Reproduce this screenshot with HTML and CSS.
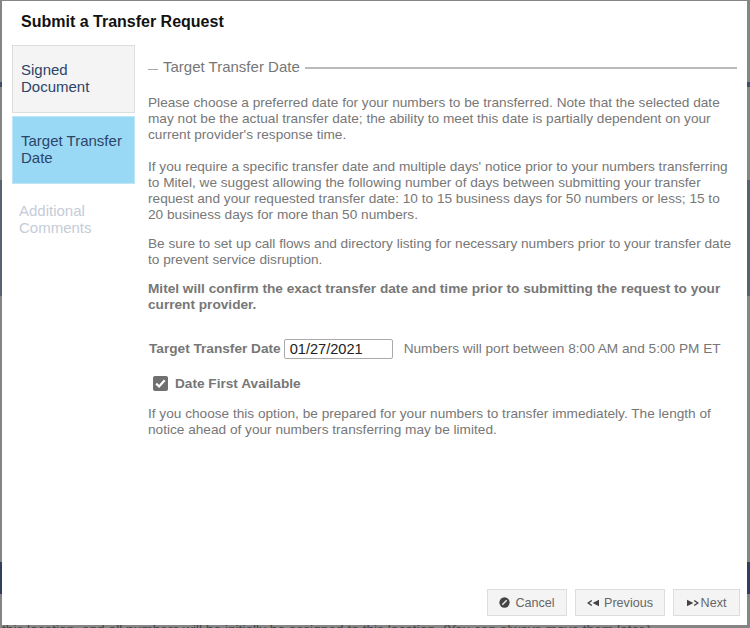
FILE: index.html
```html
<!DOCTYPE html>
<html lang="en">
<head>
  <meta charset="UTF-8" />
  <title>Submit a Transfer Request</title>
  <link rel="stylesheet" href="styles.css">
</head>
<body>
  <div class="backdrop-text">this location, and all numbers will be initially be assigned to this location. (You can always move them later.)</div>

  <div class="modal">
    <h1 class="modal-title">Submit a Transfer Request</h1>

    <div class="modal-body">
      <nav class="steps">
        <div class="step done">Signed Document</div>
        <div class="step current">Target Transfer Date</div>
        <div class="step disabled">Additional Comments</div>
      </nav>

      <div class="content">
        <div class="legend">
          <span class="legend-dash"></span>
          <span class="legend-text">Target Transfer Date</span>
          <span class="legend-line"></span>
        </div>

        <p class="intro">Please choose a preferred date for your numbers to be transferred. Note that the selected date may not be the actual transfer date; the ability to meet this date is partially dependent on your current provider's response time.</p>
        <p>If you require a specific transfer date and multiple days' notice prior to your numbers transferring to Mitel, we suggest allowing the following number of days between submitting your transfer request and your requested transfer date: 10 to 15 business days for 50 numbers or less; 15 to 20 business days for more than 50 numbers.</p>
        <p>Be sure to set up call flows and directory listing for necessary numbers prior to your transfer date to prevent service disruption.</p>
        <p class="strong">Mitel will confirm the exact transfer date and time prior to submitting the request to your current provider.</p>

        <div class="date-row">
          <label class="date-label" for="target-date">Target Transfer Date</label>
          <input class="date-input" id="target-date" type="text" value="01/27/2021">
          <span class="date-note">Numbers will port between 8:00 AM and 5:00 PM ET</span>
        </div>

        <div class="check-row">
          <svg class="check-box" viewBox="0 0 15 15" xmlns="http://www.w3.org/2000/svg">
            <rect width="15" height="15" rx="2" fill="#707070" />
            <path d="M3.2 7.6l2.9 2.9 5.6-6.2" fill="none" stroke="#fff" stroke-width="2.2" />
          </svg>
          <span class="check-label">Date First Available</span>
        </div>

        <p>If you choose this option, be prepared for your numbers to transfer immediately. The length of notice ahead of your numbers transferring may be limited.</p>
      </div>
    </div>

    <div class="modal-footer">
      <button class="btn cancel" type="button">
        <svg class="icon" viewBox="0 0 12 12" xmlns="http://www.w3.org/2000/svg">
          <circle cx="6" cy="6" r="5.6" fill="#444" />
          <path d="M3.6 8.4l4.8-4.8" stroke="#eee" stroke-width="1.6" />
        </svg>
        Cancel
      </button>
      <button class="btn prev" type="button">
        <svg class="icon-wide" viewBox="0 0 12 8" xmlns="http://www.w3.org/2000/svg">
          <path d="M4.8 1.5L1.2 4l3.6 2.5" fill="none" stroke="#444" stroke-width="1.5" />
          <path d="M12 .8v6.4L5.6 4z" fill="#444" />
        </svg>
        Previous
      </button>
      <button class="btn next" type="button">
        <svg class="icon-wide" viewBox="0 0 12 8" xmlns="http://www.w3.org/2000/svg">
          <path d="M0 .8v6.4L6.4 4z" fill="#444" />
          <path d="M7.2 1.5L10.8 4 7.2 6.5" fill="none" stroke="#444" stroke-width="1.5" />
        </svg>
        Next
      </button>
    </div>
  </div>
</body>
</html>
```

FILE: styles.css
```css
:root {
  --edge-stripes: linear-gradient(to bottom,
    #858585 82px, #3f4f68 82px, #3f4f68 87px,
    #858585 87px, #858585 180px, #566472 180px, #566472 296px,
    #858585 296px, #858585 562px, #2f3f5c 562px, #2f3f5c 594px,
    #858585 594px);
}

* {
  margin: 0;
  padding: 0;
  box-sizing: border-box;
}

html, body {
  height: 100%;
  overflow: hidden;
}

body {
  position: relative;
  background:
    var(--edge-stripes) left top / 2px 100% no-repeat,
    var(--edge-stripes) right top / 3px 100% no-repeat,
    #858585;
  font-family: "Liberation Sans", Arial, sans-serif;
  color: #777;
  padding: 1px 3px 3px 2px;
}

/* texto da pagina atras do modal, quase todo coberto */
.backdrop-text {
  position: absolute;
  left: 2px;
  top: 622px;
  font-size: 13.7px;
  line-height: 16px;
  color: #444;
  white-space: nowrap;
}

.modal {
  position: relative;
  height: 624px;
  background: #fff;
  display: flex;
  flex-direction: column;
  padding: 0 7px 9px 10px;
}

.modal-title {
  font-size: 16px;
  font-weight: bold;
  color: #111;
  line-height: 18px;
  padding: 12px 0 0 9px;
  height: 44px;
}

.modal-body {
  flex: 1;
  display: flex;
  gap: 13px;
}

/* Passos do assistente */
.steps {
  width: 123px;
  flex-shrink: 0;
  display: flex;
  flex-direction: column;
  gap: 3px;
}

.step {
  height: 68px;
  padding: 15px 8px 0;
  font-size: 15px;
  line-height: 17px;
  border: 1px solid #ddd;
}

.step.done {
  background: #f4f4f4;
  color: #2c4468;
}

.step.current {
  background: #99d9f5;
  border-color: #bfe6f7;
  color: #2c4468;
}

.step.disabled {
  border: 0;
  padding-left: 7px;
  color: #c5ccd8;
}

.content {
  flex: 1;
  min-width: 0;
  font-size: 13.65px;
  line-height: 16px;
}

.legend {
  display: flex;
  align-items: center;
  height: 24px;
  margin-top: 10px;
  margin-bottom: 16px;
  margin-right: 3px;
  gap: 5px;
  color: #777;
}

.legend-dash {
  width: 10px;
  height: 1px;
  margin-top: 5px;
  background: #aaa;
}

.legend-text {
  font-size: 15px;
}

.legend-line {
  flex: 1;
  height: 2px;
  margin-top: 2px;
  background: #bbb;
}

.content p {
  margin-bottom: 13.2px;
  padding-right: 8px;
}

.content p.intro {
  margin-bottom: 15.5px;
}

.content p.strong {
  font-weight: bold;
}

.date-row {
  display: flex;
  align-items: center;
  margin-top: 25px;
  height: 22px;
  padding-left: 1px;
}

.date-label,
.check-label {
  font-weight: bold;
}

.date-input {
  width: 109px;
  height: 20px;
  margin-left: 3px;
  padding: 0 5px;
  border: 1px solid #aaa;
  border-radius: 2px;
  font-family: inherit;
  font-size: 14.6px;
  color: #222;
}

.date-note {
  margin-left: 11px;
}

.check-row {
  display: flex;
  align-items: center;
  gap: 7px;
  height: 18px;
  margin: 15px 0 13px 5px;
}

.check-box {
  width: 15px;
  height: 15px;
}

.modal-footer {
  display: flex;
  justify-content: flex-end;
  gap: 8px;
}

.btn {
  height: 27px;
  display: flex;
  align-items: center;
  justify-content: center;
  gap: 5px;
  background: #f4f4f4;
  border: 1px solid #ddd;
  font-family: inherit;
  font-size: 12.6px;
  color: #666;
}

.btn.cancel { width: 80px; }
.btn.prev { width: 90px; }
.btn.next { width: 67px; gap: 2px; }

.icon {
  width: 11px;
  height: 11px;
}

.icon-wide {
  width: 12px;
  height: 8px;
}
```
